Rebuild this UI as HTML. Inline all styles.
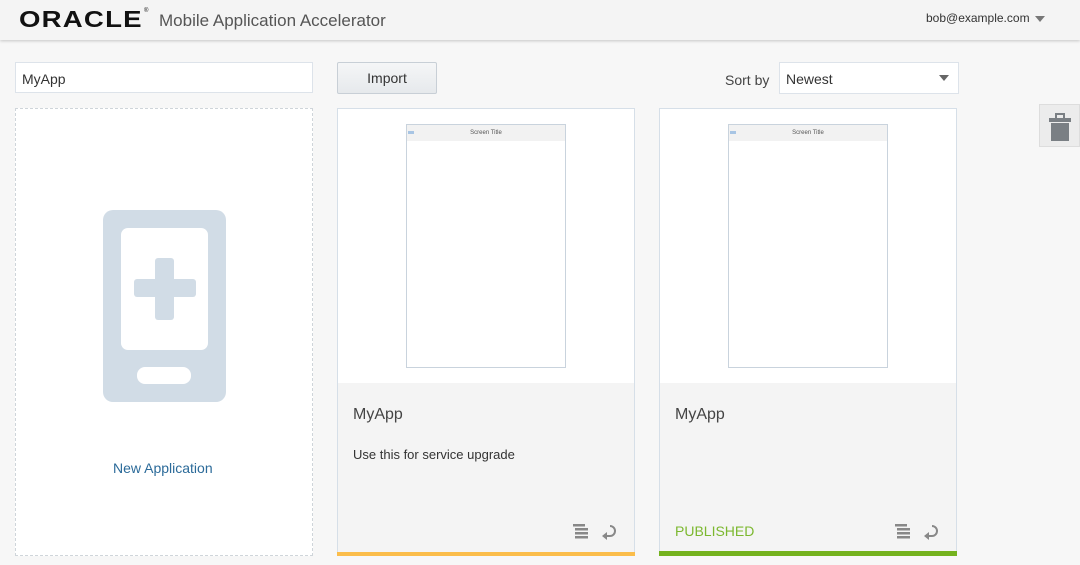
<!DOCTYPE html>
<html><head><style>
body{margin:0;width:1080px;height:565px;background:#f7f7f7;font-family:"Liberation Sans",sans-serif;overflow:hidden;position:relative}
.hdr{position:absolute;left:0;top:0;width:1080px;height:40px;background:#f4f4f4;box-shadow:0 1px 3px rgba(0,0,0,.2)}
.abs{position:absolute}
.card{position:absolute;top:108px;width:298px;height:448px;background:#f4f4f4;border:1px solid #d6dfe8;box-sizing:border-box}
.prev{position:absolute;left:0;top:0;width:296px;height:274px;background:#fff}
.phone{position:absolute;left:68px;top:15px;width:158px;height:242px;border:1px solid #c9d3dd;background:#fff}
.phone .bar{height:16px;background:#f2f2f2;font-size:6px;color:#555;text-align:center;line-height:16px;position:relative}
.phone .bar i{position:absolute;left:1px;top:6px;width:6px;height:3px;background:#a8c5e4}
.t{position:absolute;left:15px;top:297px;font-size:16px;color:#444}
.d{position:absolute;left:15px;top:338px;font-size:13px;color:#333}
</style></head><body>
<div class="hdr">
<div class="abs" style="left:19px;top:6px;font-size:23px;font-weight:bold;letter-spacing:1px;color:#111;transform:scaleX(1.2);transform-origin:left">ORACLE</div>
<div class="abs" style="left:144px;top:8px;font-size:6px;color:#111">®</div>
<div class="abs" style="left:159px;top:11px;font-size:17px;color:#555">Mobile Application Accelerator</div>
<div class="abs" style="left:926px;top:11px;font-size:12px;color:#333">bob@example.com</div>
<div class="abs" style="left:1035px;top:16px;border:5px solid transparent;border-top:6px solid #777"></div>
</div>
<div class="abs" style="left:15px;top:62px;width:298px;height:31px;border:1px solid #dde3ea;background:#fff;box-sizing:border-box;font-size:14px;color:#333;padding:8px 0 0 6px">MyApp</div>
<div class="abs" style="left:337px;top:62px;width:100px;height:32px;border:1px solid #c8cfd6;background:linear-gradient(#f5f6f7,#e6e9ec);box-sizing:border-box;font-size:14px;color:#333;text-align:center;line-height:30px;border-radius:2px">Import</div>
<div class="abs" style="left:725px;top:72px;font-size:14px;color:#444">Sort by</div>
<div class="abs" style="left:779px;top:62px;width:180px;height:32px;border:1px solid #dde3ea;background:#fff;box-sizing:border-box;font-size:14px;color:#333;padding:8px 0 0 6px">Newest</div>
<div class="abs" style="left:939px;top:75px;border:5px solid transparent;border-top:6px solid #666"></div>
<div class="abs" style="left:1039px;top:104px;width:41px;height:43px;background:#ececec;border:1px solid #ddd;box-sizing:border-box"></div>
<svg class="abs" style="left:1049px;top:112px" width="22" height="30"><rect x="7" y="2" width="8" height="5" fill="none" stroke="#7a7f84" stroke-width="2"/><rect x="0" y="6" width="22" height="4" fill="#7a7f84"/><rect x="2" y="11" width="18" height="18" fill="#7a7f84"/></svg>
<div class="abs" style="left:15px;top:108px;width:298px;height:448px;border:1px dashed #cfd5da;background:#fff;box-sizing:border-box"></div>
<svg class="abs" style="left:103px;top:210px" width="123" height="192"><rect width="123" height="192" rx="10" fill="#d1dce6"/><rect x="18" y="18" width="87" height="122" rx="7" fill="#fff"/><rect x="34" y="157" width="54" height="17" rx="8" fill="#fff"/><rect x="31" y="69" width="62" height="18" rx="3" fill="#d1dce6"/><rect x="52" y="48" width="19" height="62" rx="3" fill="#d1dce6"/></svg>
<div class="abs" style="left:113px;top:460px;font-size:14px;color:#2b6a99">New Application</div>
<div class="card" style="left:337px"><div class="prev"><div class="phone"><div class="bar"><i></i>Screen Title</div></div></div>
<div class="t">MyApp</div><div class="d">Use this for service upgrade</div>
<div class="abs" style="left:-1px;bottom:-1px;width:298px;height:4px;background:#fbbd4b"></div></div>
<div class="card" style="left:659px"><div class="prev"><div class="phone"><div class="bar"><i></i>Screen Title</div></div></div>
<div class="t">MyApp</div>
<div class="abs" style="left:15px;top:414px;font-size:14px;color:#7cb82f">PUBLISHED</div>
<div class="abs" style="left:-1px;bottom:-1px;width:298px;height:5px;background:#74b21e"></div></div>
<svg class="abs" style="left:572px;top:523px" width="50" height="18"><g fill="#888"><rect x="1" y="1" width="12" height="2.5"/><rect x="3" y="5" width="13" height="2.5"/><rect x="3" y="9" width="13" height="2.5"/><rect x="3" y="13" width="13" height="2.5"/></g><path d="M38 3 A5 5 0 0 1 38 13 H34" fill="none" stroke="#888" stroke-width="2"/><path d="M30 13 L35 9 V17 Z" fill="#888"/></svg>
<svg class="abs" style="left:894px;top:523px" width="50" height="18"><g fill="#888"><rect x="1" y="1" width="12" height="2.5"/><rect x="3" y="5" width="13" height="2.5"/><rect x="3" y="9" width="13" height="2.5"/><rect x="3" y="13" width="13" height="2.5"/></g><path d="M38 3 A5 5 0 0 1 38 13 H34" fill="none" stroke="#888" stroke-width="2"/><path d="M30 13 L35 9 V17 Z" fill="#888"/></svg>
</body></html>
